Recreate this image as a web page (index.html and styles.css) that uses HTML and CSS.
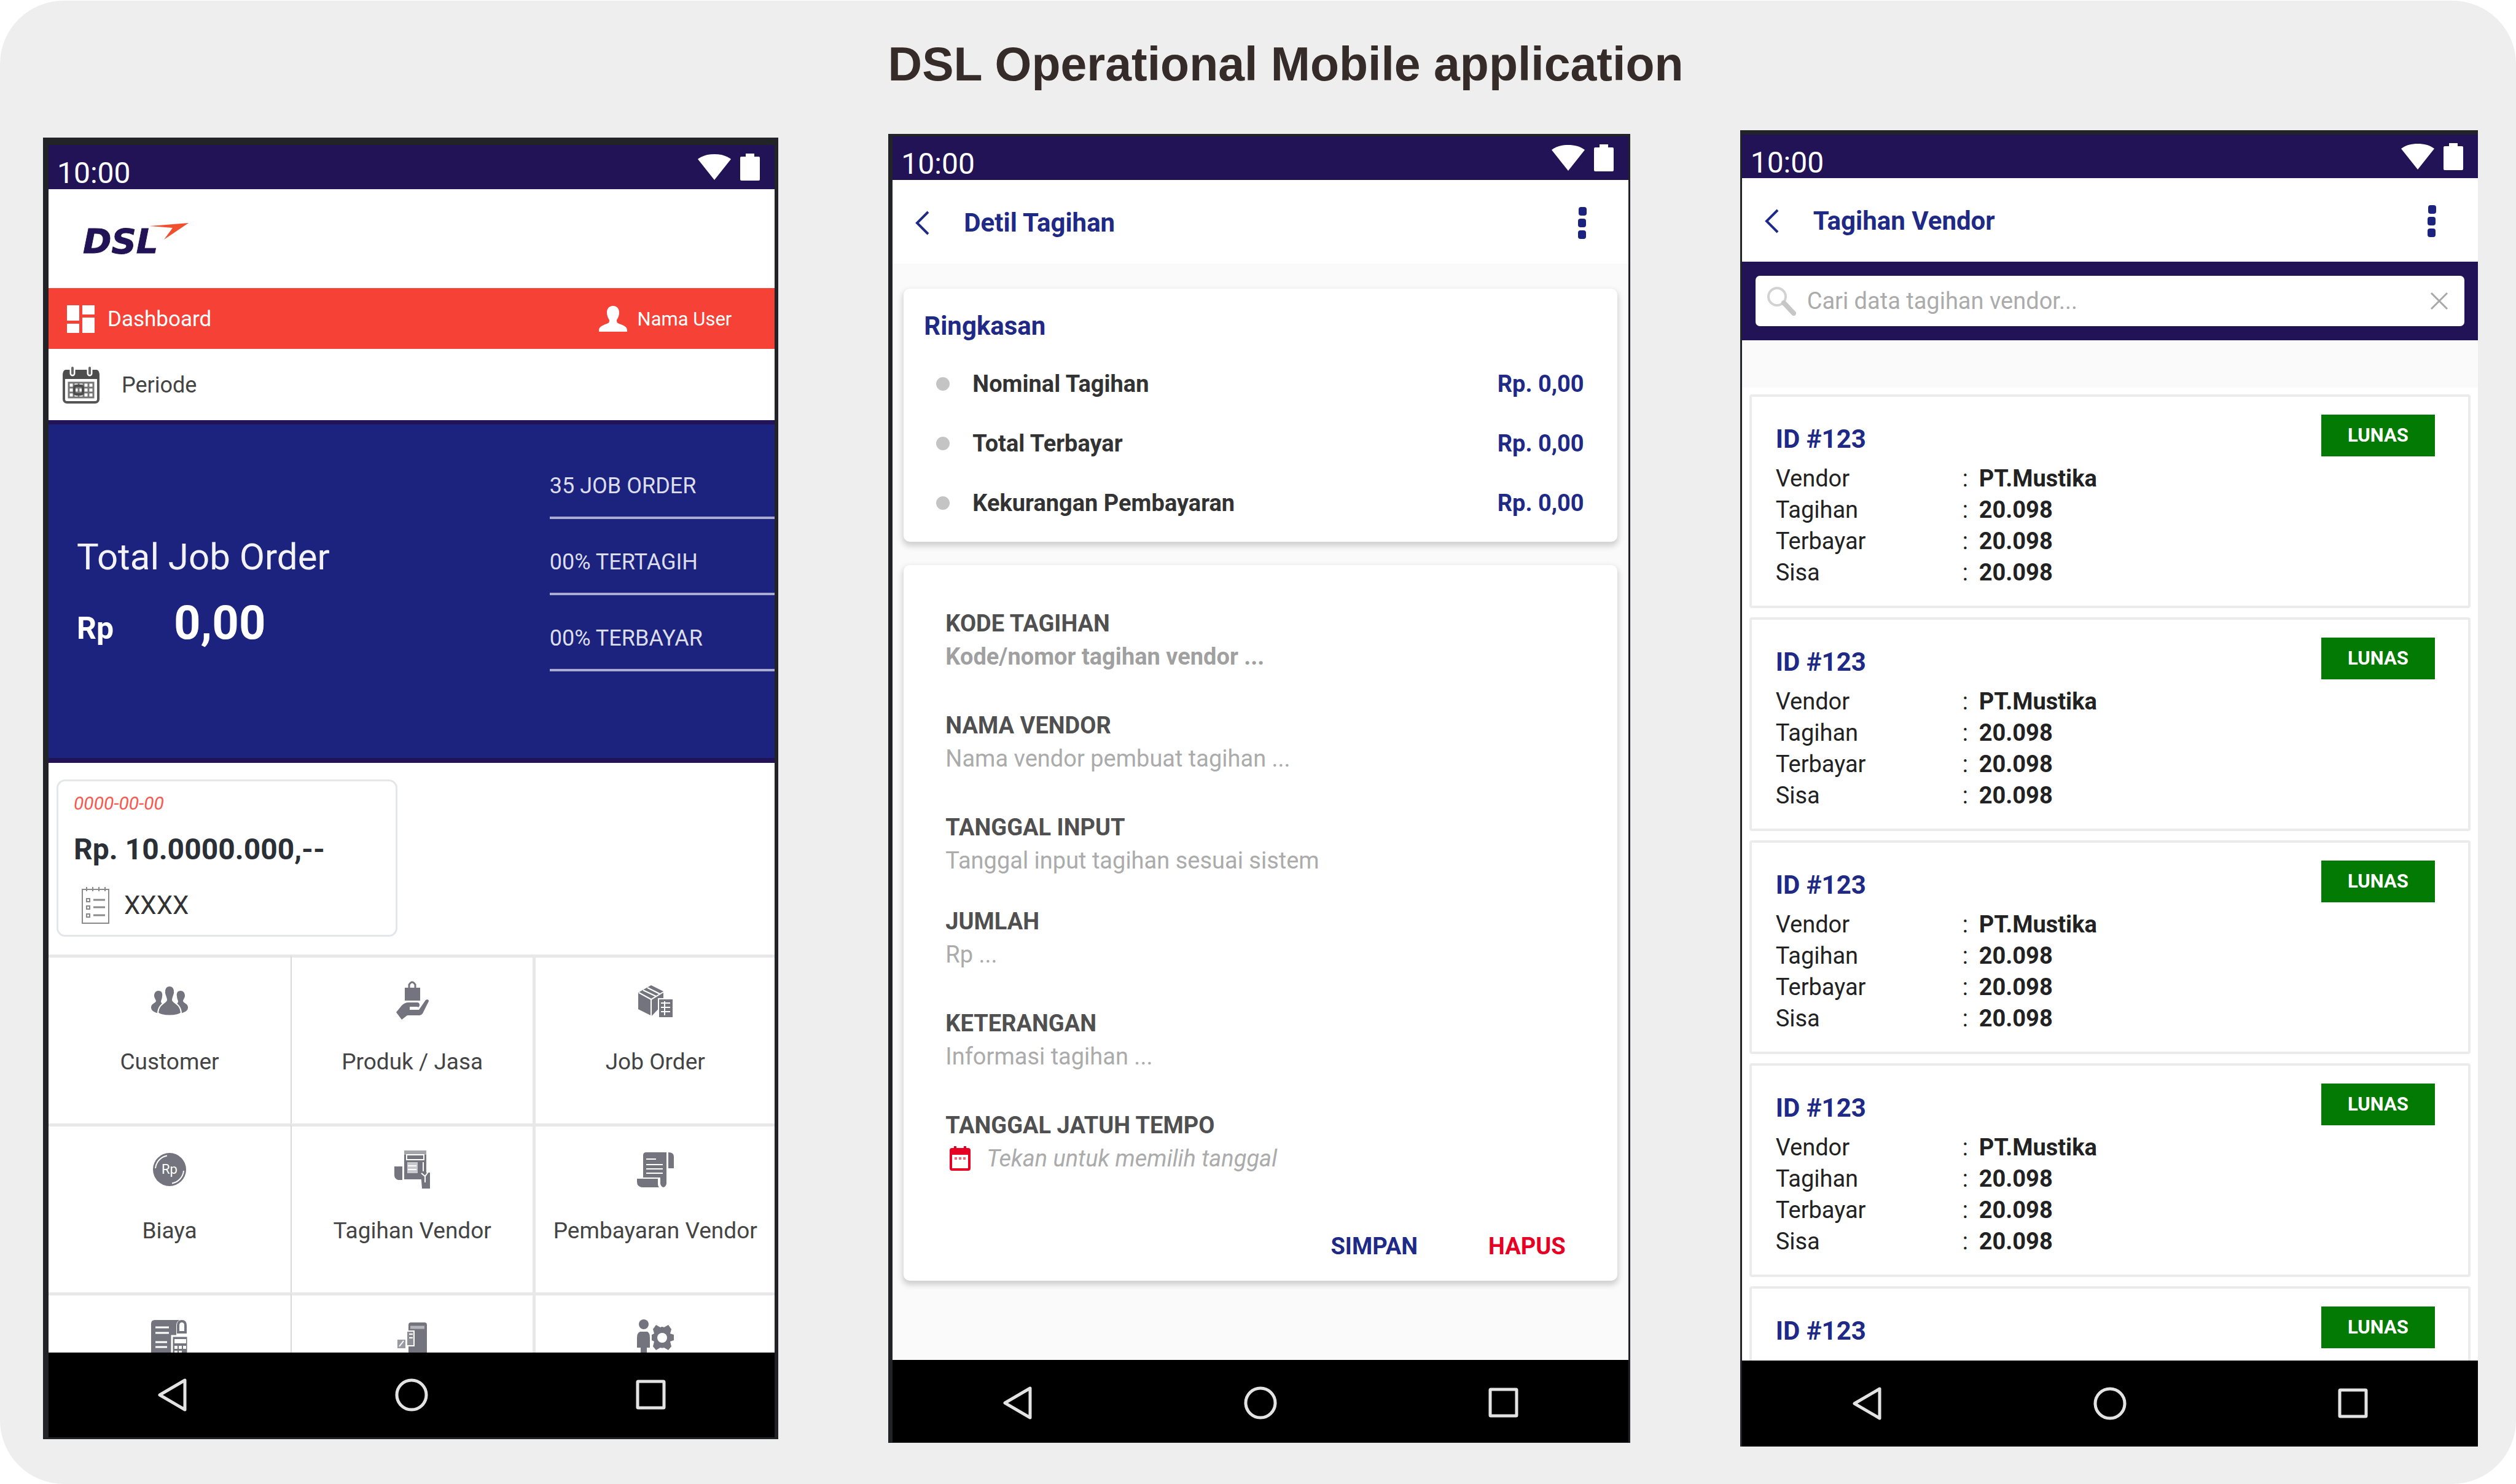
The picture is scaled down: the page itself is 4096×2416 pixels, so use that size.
FILE: index.html
```
<!DOCTYPE html>
<html lang="id">
<head>
<meta charset="utf-8">
<title>DSL Operational Mobile application</title>
<link rel="stylesheet" href="styles.css">
</head>
<body>
<svg class="sprite" width="0" height="0" aria-hidden="true">
  <symbol id="wifi" viewBox="0 0 54 42"><path d="M0 8C8 2 17 0 27 0s19 2 27 8L27 42z"/></symbol>
  <symbol id="battery" viewBox="0 0 32 44"><path d="M9 0h14v5h7q2 0 2 2v35q0 2-2 2H2q-2 0-2-2V7q0-2 2-2h7z"/></symbol>
  <symbol id="back" viewBox="0 0 24 40"><path d="M22 2 4 20l18 18" fill="none" stroke="currentColor" stroke-width="4"/></symbol>
  <symbol id="more" viewBox="0 0 16 52"><rect x="2" y="0" width="13" height="14" rx="4"/><rect x="1" y="19" width="13" height="14" rx="4"/><rect x="1" y="38" width="13" height="14" rx="4"/></symbol>
  <symbol id="nav-back" viewBox="0 0 56 56"><path d="M49 4v48L8 28z" fill="none" stroke="currentColor" stroke-width="5" stroke-linejoin="round"/></symbol>
  <symbol id="nav-home" viewBox="0 0 56 56"><circle cx="28" cy="28" r="24" fill="none" stroke="currentColor" stroke-width="5"/></symbol>
  <symbol id="nav-recent" viewBox="0 0 56 56"><rect x="6" y="6" width="43" height="43" rx="1" fill="none" stroke="currentColor" stroke-width="5"/></symbol>
</svg>

<main class="board">
  <h1 class="board-title">DSL Operational Mobile application</h1>
  <div class="phones">

    <section class="phone phone-dashboard" aria-label="Dashboard">
      <div class="status"><span class="clock">10:00</span><svg class="wifi"><use href="#wifi"/></svg><svg class="battery"><use href="#battery"/></svg></div>
      <div class="screen">
        <header class="brand">
          <svg class="logo" viewBox="0 0 180 56" role="img" aria-label="DSL">
            <text class="logo-text" x="4" y="52">DSL</text>
            <path d="M112 8 176 3 136 30 150 11z" fill="#f1502f"/>
          </svg>
        </header>
        <div class="userbar">
          <svg class="icon-dash" viewBox="0 0 45 45"><path d="M0 0h20v25H0zM25 0h20v15H25zM0 30h20v15H0zM25 20h20v25H25z"/></svg>
          <span class="userbar-title">Dashboard</span>
          <svg class="icon-user" viewBox="0 0 46 42"><path d="M23 0c7 0 10 5 10 11 0 5-2 9-4 12 0 4 1 5 4 6 8 3 13 5 13 11v2H0v-2c0-6 5-8 13-11 3-1 4-2 4-6-2-3-4-7-4-12C13 5 16 0 23 0z"/></svg>
          <span class="username">Nama User</span>
        </div>
        <div class="period">
          <svg class="icon-period" viewBox="0 0 60 60">
            <rect x="2" y="7" width="56" height="51" rx="5" fill="#fff" stroke="#555" stroke-width="4"/>
            <path d="M1 20V10q0-5 5-5h48q5 0 5 5v10z" fill="#4d4d4d"/>
            <path d="M16 2v9M44 2v9" stroke="#fff" stroke-width="9" stroke-linecap="round"/>
            <path d="M16 2v9M44 2v9" stroke="#666" stroke-width="4" stroke-linecap="round"/>
            <path d="M10 26h40v24H10zM10 34h40M10 42h40M18 26v24M26 26v24M34 26v24M42 26v24" fill="none" stroke="#777" stroke-width="3"/>
            <rect x="19" y="31" width="14" height="14" rx="3" fill="none" stroke="#4d4d4d" stroke-width="4"/>
          </svg>
          <span>Periode</span>
        </div>
        <div class="total">
          <div class="total-main">
            <p class="total-label">Total Job Order</p>
            <p class="total-value"><span class="currency">Rp</span><strong>0,00</strong></p>
          </div>
          <ul class="total-stats">
            <li>35 JOB ORDER</li>
            <li>00% TERTAGIH</li>
            <li>00% TERBAYAR</li>
          </ul>
        </div>
        <div class="recent">
          <article class="recent-card">
            <p class="recent-date">0000-00-00</p>
            <p class="recent-amount">Rp. 10.0000.000,--</p>
            <p class="recent-note">
              <svg class="icon-note" viewBox="0 0 45 62" fill="none" stroke="#8a8a8a" stroke-width="2">
                <path d="M1 5h43v55H1z"/><path d="M8 1v7M18 1v7M28 1v7M38 1v7"/>
                <path d="M19 22h19M19 34h19M19 47h19" stroke-width="3"/><path d="M8 20h5v5H8zM8 32h5v5H8zM8 45h5v5H8z"/>
              </svg>
              <span>XXXX</span>
            </p>
          </article>
        </div>
        <nav class="menu" aria-label="Menu">
          <a href="#customer">
            <svg viewBox="0 0 64 64"><path d="M14 16c5 0 7 4 6 9 0 4-2 6-2 9 1 3 4 4 4 7l-7 12C6 51 2 48 2 43c0-6 7-7 8-10 0-3-3-5-3-9 0-5 3-8 7-8zM50 16c-5 0-7 4-6 9 0 4 2 6 2 9-1 3-4 4-4 7l7 12c9-2 13-5 13-10 0-6-7-7-8-10 0-3 3-5 3-9 0-5-3-8-7-8z"/><path d="M32 8c6 0 9 5 8 12-1 5-3 7-3 11 1 5 13 6 14 21-5 6-33 6-38 0 1-15 13-16 14-21 0-4-2-6-3-11-1-7 2-12 8-12z" stroke="#fff" stroke-width="2"/></svg>
            <span>Customer</span>
          </a>
          <a href="#produk">
            <svg viewBox="0 0 64 64"><path d="M20 11h25v21H20z"/><path d="M27 14V6q5-8 10 0v8" fill="none" stroke="#74747e" stroke-width="3"/><path d="M6 51 15 40q5-5 11-5h14q4 0 4 4t-4 4H28v4h15l11-16q5-2 5 2L49 53q-2 3-6 3H24l-9 7z"/><path d="M28 43h13" stroke="#fff" stroke-width="2"/></svg>
            <span>Produk / Jasa</span>
          </a>
          <a href="#job-order">
            <svg viewBox="0 0 64 64"><path d="M25 7 45 17v20L26 57 4 46V19z"/><path d="M5 19 25 30 45 18M25 30v27M12 15l21 10M19 11l20 10" fill="none" stroke="#fff" stroke-width="2"/><path d="M37 29h24v31H37z" stroke="#fff" stroke-width="2"/><path d="M41 36h15M41 43h15M41 50h15M47 33v23" stroke="#fff" stroke-width="2"/></svg>
            <span>Job Order</span>
          </a>
          <a href="#biaya">
            <svg viewBox="0 0 64 64"><circle cx="32" cy="32" r="27"/><path d="M9 30A23 23 0 0 1 28 9.500M55 34A23 23 0 0 1 36 54.500" fill="none" stroke="#fff" stroke-width="2"/><text class="coin" x="32" y="39" text-anchor="middle">Rp</text></svg>
            <span>Biaya</span>
          </a>
          <a href="#tagihan-vendor">
            <svg viewBox="0 0 64 64"><path d="M19 1h36v47H19zM3 27h13v22H9q-6-2-6-8zM46 37h15v26H48z"/><path d="M19 1h36v7H19z" fill="#a3a3aa"/><path d="M23 8h28v8H23z" fill="none" stroke="#fff" stroke-width="2"/><path d="M24 20h17v18H24z" fill="#c9c9ce"/><path d="M50 20v15M25 26h14M25 32h14" stroke="#fff" stroke-width="2"/><path d="M47 38l6 5 5-7M53 43v10" fill="none" stroke="#fff" stroke-width="2"/></svg>
            <span>Tagihan Vendor</span>
          </a>
          <a href="#pembayaran-vendor">
            <svg viewBox="0 0 64 64"><path d="M12 9q0-5 5-5h33v51q-1 5-5 6-4-1-5-6V45H12z"/><path d="M53 4q9 0 9 7v19h-9zM2 47h34v9q0 3 2 5H10q-8-1-8-9z"/><path d="M17 15h16M17 24h27M17 31h27M17 38h27" stroke="#fff" stroke-width="2"/></svg>
            <span>Pembayaran Vendor</span>
          </a>
          <a href="#laporan" aria-label="Laporan">
            <svg viewBox="0 0 64 64"><path d="M2 8q0-6 6-6h40q-5 3-5 9v49H2z"/><path d="M46 22V11q0-7 6-7t6 7v11z" fill="none" stroke="#74747e" stroke-width="4"/><path d="M9 14h22M9 23h22M9 38h19M9 46h19" stroke="#fff" stroke-width="3"/><path d="M36 28h26v36H36z" stroke="#fff" stroke-width="3"/><path d="M40 33h19v7H40zM40 44h5v5h-5zM47 44h5v5h-5zM54 44h5v5h-5zM40 52h5v5h-5zM47 52h5v5h-5z" fill="#fff"/></svg>
          </a>
          <a href="#mobile" aria-label="Mobile">
            <svg viewBox="0 0 64 64"><path d="M26 10q0-4 4-4h22q4 0 4 4v54H26z"/><path d="M29 14h23" stroke="#b5b5bb" stroke-width="5"/><path d="M23 20h12v24H23z" fill="#8d8d95" stroke="#fff" stroke-width="2"/><path d="M27 25h6M27 31h6" stroke="#fff" stroke-width="2"/><path d="M8 34h13v14H8z" fill="#9a9aa2"/><path d="M11 45l7-9" stroke="#fff" stroke-width="2"/></svg>
          </a>
          <a href="#pengaturan" aria-label="Pengaturan">
            <svg viewBox="0 0 64 64"><circle cx="13" cy="9" r="8"/><path d="M7 21h12q4 2 4 10v16h-5v17H8V47H2V31q0-8 5-10z"/><path d="m28 17 5-7 7 4q3-2 6 0l7-4 5 7-2 7 6 2v9l-6 2 2 8-5 6-7-4q-3 1-6 0l-7 4-5-6 2-8-4-2V26l4-2z"/><circle cx="43" cy="31" r="8" fill="#fff"/></svg>
          </a>
        </nav>
      </div>
      <div class="navbar">
        <button type="button" aria-label="Kembali"><svg><use href="#nav-back"/></svg></button>
        <button type="button" aria-label="Beranda"><svg><use href="#nav-home"/></svg></button>
        <button type="button" aria-label="Terkini"><svg><use href="#nav-recent"/></svg></button>
      </div>
    </section>

    <section class="phone phone-detail" aria-label="Detil Tagihan">
      <div class="status"><span class="clock">10:00</span><svg class="wifi"><use href="#wifi"/></svg><svg class="battery"><use href="#battery"/></svg></div>
      <header class="appbar">
        <button type="button" class="appbar-back" aria-label="Kembali"><svg><use href="#back"/></svg></button>
        <h2>Detil Tagihan</h2>
        <button type="button" class="appbar-more" aria-label="Menu lain"><svg><use href="#more"/></svg></button>
      </header>
      <div class="screen detail">
        <section class="card summary">
          <h3>Ringkasan</h3>
          <ul>
            <li><span>Nominal Tagihan</span><b>Rp. 0,00</b></li>
            <li><span>Total Terbayar</span><b>Rp. 0,00</b></li>
            <li><span>Kekurangan Pembayaran</span><b>Rp. 0,00</b></li>
          </ul>
        </section>
        <form class="card form">
          <div class="field"><label for="kode">KODE TAGIHAN</label><input class="strong" id="kode" type="text" placeholder="Kode/nomor tagihan vendor ..."></div>
          <div class="field"><label for="nama">NAMA VENDOR</label><input id="nama" type="text" placeholder="Nama vendor pembuat tagihan ..."></div>
          <div class="field"><label for="input">TANGGAL INPUT</label><input id="input" type="text" placeholder="Tanggal input tagihan sesuai sistem"></div>
          <div class="field field-near"><label for="jumlah">JUMLAH</label><input id="jumlah" type="text" placeholder="Rp ..."></div>
          <div class="field"><label for="ket">KETERANGAN</label><input id="ket" type="text" placeholder="Informasi tagihan ..."></div>
          <div class="field">
            <label for="tempo">TANGGAL JATUH TEMPO</label>
            <div class="date">
              <svg viewBox="0 0 36 40"><path d="M5 3h3V0h4v3h12V0h4v3h3q4 0 4 4v29q0 4-4 4H5q-4 0-4-4V7q0-4 4-4zM5 14v22h26V14z" fill-rule="evenodd"/><path d="M9 18h4v4H9zM16 18h4v4h-4zM23 18h4v4h-4z" opacity=".6"/></svg>
              <input id="tempo" type="text" placeholder="Tekan untuk memilih tanggal">
            </div>
          </div>
          <div class="actions"><button type="button" class="save">SIMPAN</button><button type="button" class="delete">HAPUS</button></div>
        </form>
      </div>
      <div class="navbar">
        <button type="button" aria-label="Kembali"><svg><use href="#nav-back"/></svg></button>
        <button type="button" aria-label="Beranda"><svg><use href="#nav-home"/></svg></button>
        <button type="button" aria-label="Terkini"><svg><use href="#nav-recent"/></svg></button>
      </div>
    </section>

    <section class="phone phone-list" aria-label="Tagihan Vendor">
      <div class="status"><span class="clock">10:00</span><svg class="wifi"><use href="#wifi"/></svg><svg class="battery"><use href="#battery"/></svg></div>
      <header class="appbar">
        <button type="button" class="appbar-back" aria-label="Kembali"><svg><use href="#back"/></svg></button>
        <h2>Tagihan Vendor</h2>
        <button type="button" class="appbar-more" aria-label="Menu lain"><svg><use href="#more"/></svg></button>
      </header>
      <div class="search">
        <div class="search-box">
          <svg class="icon-search" viewBox="0 0 48 48"><circle cx="17" cy="17" r="14" fill="none" stroke="#d2d2d2" stroke-width="4"/><path d="m28 27 16 17" stroke="#c6c6c6" stroke-width="8" stroke-linecap="round"/></svg>
          <input type="text" aria-label="Cari" placeholder="Cari data tagihan vendor...">
          <button type="button" aria-label="Hapus"><svg viewBox="0 0 30 30"><path d="m2 2 26 26M28 2 2 28" stroke="#a8a8a8" stroke-width="3"/></svg></button>
        </div>
      </div>
      <div class="screen bills">
        <article class="bill">
          <header><h3>ID #123</h3><span class="badge">LUNAS</span></header>
          <table>
            <tr><th>Vendor</th><td>:</td><td>PT.Mustika</td></tr>
            <tr><th>Tagihan</th><td>:</td><td>20.098</td></tr>
            <tr><th>Terbayar</th><td>:</td><td>20.098</td></tr>
            <tr><th>Sisa</th><td>:</td><td>20.098</td></tr>
          </table>
        </article>
        <article class="bill">
          <header><h3>ID #123</h3><span class="badge">LUNAS</span></header>
          <table>
            <tr><th>Vendor</th><td>:</td><td>PT.Mustika</td></tr>
            <tr><th>Tagihan</th><td>:</td><td>20.098</td></tr>
            <tr><th>Terbayar</th><td>:</td><td>20.098</td></tr>
            <tr><th>Sisa</th><td>:</td><td>20.098</td></tr>
          </table>
        </article>
        <article class="bill">
          <header><h3>ID #123</h3><span class="badge">LUNAS</span></header>
          <table>
            <tr><th>Vendor</th><td>:</td><td>PT.Mustika</td></tr>
            <tr><th>Tagihan</th><td>:</td><td>20.098</td></tr>
            <tr><th>Terbayar</th><td>:</td><td>20.098</td></tr>
            <tr><th>Sisa</th><td>:</td><td>20.098</td></tr>
          </table>
        </article>
        <article class="bill">
          <header><h3>ID #123</h3><span class="badge">LUNAS</span></header>
          <table>
            <tr><th>Vendor</th><td>:</td><td>PT.Mustika</td></tr>
            <tr><th>Tagihan</th><td>:</td><td>20.098</td></tr>
            <tr><th>Terbayar</th><td>:</td><td>20.098</td></tr>
            <tr><th>Sisa</th><td>:</td><td>20.098</td></tr>
          </table>
        </article>
        <article class="bill">
          <header><h3>ID #123</h3><span class="badge">LUNAS</span></header>
        </article>
      </div>
      <div class="navbar">
        <button type="button" aria-label="Kembali"><svg><use href="#nav-back"/></svg></button>
        <button type="button" aria-label="Beranda"><svg><use href="#nav-home"/></svg></button>
        <button type="button" aria-label="Terkini"><svg><use href="#nav-recent"/></svg></button>
      </div>
    </section>

  </div>
</main>
</body>
</html>
```
FILE: styles.css
```
* {
  box-sizing: border-box;
}

body {
  margin: 0;
  background: #fff;
  color: #333;
  font-family: Roboto, "Liberation Sans", sans-serif;
  font-size: 38px;
}

h1, h2, h3, p, ul {
  margin: 0;
  padding: 0;
}

ul {
  list-style: none;
}

svg {
  display: block;
  flex: none;
}

button {
  padding: 0;
  border: 0;
  background: none;
  color: inherit;
  font: inherit;
}

input {
  display: block;
  width: 100%;
  padding: 0;
  border: 0;
  background: none;
  color: #333;
  font: inherit;
}

input::placeholder {
  color: #ababab;
  opacity: 1;
}

.sprite {
  position: absolute;
}

/* Board */

.board {
  min-height: 100vh;
  padding: 57px 62px 60px 70px;
  border-top: 1px solid #fff;
  border-radius: 104px;
  background: #eee;
}

.board-title {
  padding-left: 82px;
  color: #352b28;
  font: bold 77px/92px "Liberation Sans", Arial, sans-serif;
  text-align: center;
}

.phones {
  display: grid;
  grid-template-columns: 1198fr 1208fr 1202fr;
  align-items: center;
  gap: 179px;
  margin-top: 62px;
}

/* Phone frame */

.phone {
  display: flex;
  flex-direction: column;
  min-width: 0;
  min-height: 0;
  overflow: hidden;
  border: solid #222326;
}

.phone-dashboard {
  aspect-ratio: 1198 / 2121;
  border-width: 12px 6px 3px 9px;
}

.phone-detail {
  aspect-ratio: 1208 / 2133;
  border-width: 4px 3px 1px 7px;
}

.phone-list {
  aspect-ratio: 1202 / 2144;
  border-width: 7px 0 0 3px;
}

.status {
  display: flex;
  flex: none;
  align-items: center;
  height: 72px;
  padding: 0 24px 0 14px;
  background: #221356;
  color: #fff;
  fill: #fff;
}

.phone-detail .status,
.phone-list .status {
  height: 71px;
}

.clock {
  padding-top: 20px;
  font-size: 48px;
  line-height: 52px;
}

.wifi {
  width: 54px;
  height: 42px;
  margin-left: auto;
}

.battery {
  width: 32px;
  height: 44px;
  margin-left: 15px;
}

.screen {
  flex: 1;
  min-height: 0;
  overflow: hidden;
  background: #fff;
}

.navbar {
  display: flex;
  flex: none;
  align-items: center;
  justify-content: center;
  gap: 340px;
  height: 140px;
  background: #000;
  color: #e3e3e3;
}

.phone-dashboard .navbar {
  gap: 334px;
  height: 138px;
}

.phone-detail .navbar {
  height: 134px;
  padding-top: 6px;
}

.navbar svg {
  width: 56px;
  height: 56px;
}

/* Dashboard */

.brand {
  display: flex;
  align-items: center;
  height: 161px;
  padding-left: 52px;
}

.logo {
  width: 180px;
  height: 56px;
  overflow: visible;
}

.logo-text {
  fill: #221356;
  stroke: #221356;
  stroke-width: 1px;
  font: italic bold 56px "DejaVu Sans", sans-serif;
}

.userbar {
  display: flex;
  align-items: center;
  height: 99px;
  padding: 2px 70px 0 30px;
  background: #f64236;
  color: #fff;
  fill: #fff;
}

.icon-dash {
  width: 45px;
  height: 45px;
}

.userbar-title {
  margin-left: 21px;
  font-size: 35px;
}

.icon-user {
  width: 46px;
  height: 42px;
  margin-left: auto;
}

.username {
  margin-left: 17px;
  font-size: 31px;
}

.period {
  display: flex;
  align-items: center;
  gap: 36px;
  height: 116px;
  padding: 2px 0 0 23px;
  color: #444;
  font-size: 36px;
}

.icon-period {
  width: 60px;
  height: 60px;
}

.total {
  display: flex;
  justify-content: space-between;
  height: 558px;
  border: solid #221356;
  border-width: 7px 0 8px;
  background: #1b237e;
  color: #f2f2f8;
}

.total-main {
  padding: 180px 0 0 46px;
}

.total-label {
  font-size: 60px;
  line-height: 72px;
}

.total-value {
  display: flex;
  align-items: baseline;
  margin-top: 27px;
  color: #fff;
  font-size: 76px;
  line-height: 88px;
}

.currency {
  width: 158px;
  font-size: 50px;
  font-weight: bold;
}

.total-stats {
  width: 31%;
  padding-top: 30px;
  color: #dcddea;
  font-size: 36px;
}

.total-stats li {
  height: 124px;
  padding-top: 48px;
  border-bottom: 4px solid #a9abcf;
  line-height: 44px;
}

.recent {
  padding: 27px 13px 29px;
}

.recent-card {
  width: 48%;
  height: 256px;
  padding: 16px 25px 0;
  border: 3px solid #e3e7ea;
  border-radius: 14px;
}

.recent-date {
  color: #f8584d;
  font-size: 30px;
  font-style: italic;
  line-height: 40px;
}

.recent-amount {
  margin-top: 25px;
  color: #2b2f36;
  font-size: 48px;
  font-weight: bold;
  line-height: 60px;
}

.recent-note {
  display: flex;
  align-items: center;
  gap: 24px;
  margin-top: 30px;
  padding-left: 13px;
  font-size: 42px;
}

.icon-note {
  width: 45px;
  height: 62px;
}

.menu {
  display: grid;
  grid-template-columns: repeat(3, 1fr);
  grid-auto-rows: 275px;
}

.menu a {
  display: flex;
  flex-direction: column;
  align-items: center;
  gap: 44px;
  padding-top: 38px;
  border-top: 5px solid #e8e8e8;
  color: #444;
  font-size: 37px;
  line-height: 48px;
  text-decoration: none;
  white-space: nowrap;
}

.menu a:nth-child(3n + 2) {
  border-left: 2px solid #d9d9d9;
}

.menu a:nth-child(3n) {
  border-left: 5px solid #e8e8e8;
}

.menu svg {
  width: 64px;
  height: 64px;
  fill: #74747e;
}

.coin {
  fill: #fff;
  font-size: 22px;
}

/* App bar */

.appbar {
  display: flex;
  flex: none;
  align-items: center;
  height: 136px;
  padding: 4px 67px 0 36px;
  background: #fff;
  color: #1f2a86;
  fill: #1b237e;
}

.appbar-back {
  width: 80px;
}

.appbar-back svg {
  width: 24px;
  height: 40px;
}

.appbar h2 {
  flex: 1;
  font-size: 42px;
  line-height: 52px;
}

.appbar-more svg {
  width: 16px;
  height: 52px;
}

/* Bill detail */

.detail {
  padding: 41px 18px 0;
  background: #fafafa;
}

.card {
  border-radius: 10px;
  background: #fff;
  box-shadow: 0 5px 10px 2px rgba(0, 0, 0, 0.17);
}

.summary {
  padding: 35px 54px 14px 33px;
}

.summary h3 {
  margin-bottom: 20px;
  color: #1f2a86;
  font-size: 42px;
  line-height: 52px;
}

.summary li {
  display: flex;
  align-items: center;
  padding-left: 20px;
  line-height: 97px;
}

.summary li::before {
  width: 22px;
  height: 22px;
  margin-right: 37px;
  border-radius: 50%;
  background: #c4c4c4;
  content: "";
}

.summary span {
  flex: 1;
  font-weight: bold;
}

.summary b {
  color: #1f2a86;
}

.form {
  margin-top: 38px;
  padding: 68px 84px 29px 68px;
}

.field + .field {
  margin-top: 58px;
}

.field + .field-near {
  margin-top: 45px;
}

.field label {
  display: block;
  color: #505050;
  font-weight: bold;
  line-height: 54px;
}

.field input {
  height: 54px;
}

.field .strong {
  font-weight: bold;
}

.field .strong::placeholder {
  color: #a0a0a0;
}

.date {
  display: flex;
  align-items: center;
  gap: 25px;
  padding-left: 6px;
}

.date svg {
  width: 36px;
  height: 40px;
  fill: #e60023;
}

.date input {
  font-style: italic;
}

.actions {
  display: flex;
  justify-content: flex-end;
  gap: 115px;
  margin-top: 89px;
  font-weight: bold;
  line-height: 54px;
}

.save {
  color: #1f2a86;
}

.delete {
  color: #e60023;
}

/* Bill list */

.search {
  flex: none;
  padding: 23px 22px;
  background: #221356;
}

.search-box {
  display: flex;
  align-items: center;
  height: 82px;
  padding: 0 26px 0 18px;
  border-radius: 7px;
  background: #fff;
}

.icon-search {
  width: 48px;
  height: 48px;
  margin-right: 18px;
}

.search-box button svg {
  width: 30px;
  height: 30px;
}

.bills {
  display: flex;
  flex-direction: column;
  gap: 15px;
  padding: 11px 12px 0;
  border-top: 77px solid #fafafa;
}

.bill {
  flex: none;
  padding: 29px 54px 28px 39px;
  border: 4px solid #ebebeb;
  border-radius: 4px;
  color: #222;
}

.bill header {
  display: flex;
  align-items: flex-end;
  justify-content: space-between;
}

.bill h3 {
  color: #1f2a86;
  font-size: 42px;
  line-height: 56px;
}

.badge {
  width: 185px;
  background: #037a03;
  color: #fff;
  font-size: 31px;
  font-weight: bold;
  line-height: 68px;
  text-align: center;
}

.bill table {
  width: 100%;
  margin-top: 11px;
  border-collapse: collapse;
  line-height: 51px;
}

.bill th,
.bill td {
  padding: 0;
  text-align: left;
}

.bill th {
  width: 304px;
  font-weight: normal;
}

.bill td {
  width: 27px;
}

.bill td:last-child {
  width: auto;
  font-weight: bold;
}
```
